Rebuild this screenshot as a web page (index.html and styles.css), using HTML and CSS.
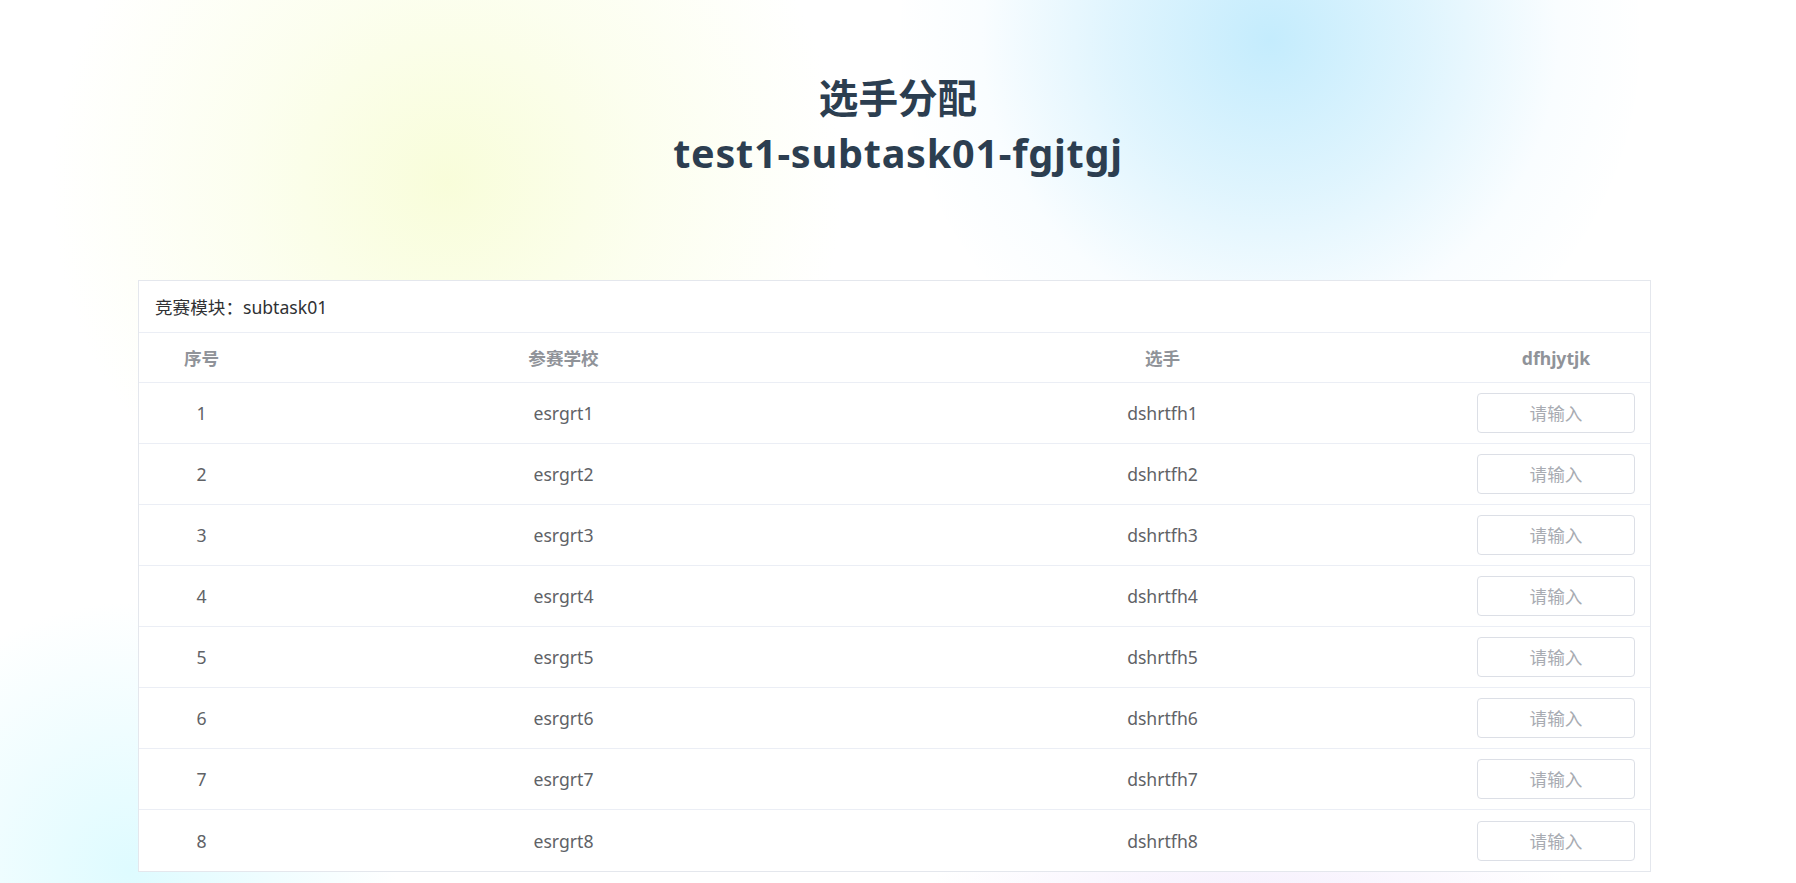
FILE: index.html
```html
<!DOCTYPE html>
<html lang="zh-CN">
<head>
<meta charset="utf-8">
<title>选手分配</title>
<link rel="stylesheet" href="styles.css">
</head>
<body>
<div class="page">
  <div class="blob blob-yellow"></div>
  <div class="blob blob-blue"></div>
  <div class="blob blob-cyan"></div>
  <div class="blob blob-purple"></div>
  <header class="title">
    <h1>选手分配</h1>
    <h1 class="sub">test1-subtask01-fgjtgj</h1>
  </header>
  <section class="card">
    <div class="caption">竞赛模块：subtask01</div>
    <div class="row head">
      <div class="cell">序号</div>
      <div class="cell">参赛学校</div>
      <div class="cell">选手</div>
      <div class="cell">dfhjytjk</div>
    </div>
    <div class="row"><div class="cell">1</div><div class="cell">esrgrt1</div><div class="cell">dshrtfh1</div><div class="cell"><input class="inp" placeholder="请输入"></div></div>
    <div class="row"><div class="cell">2</div><div class="cell">esrgrt2</div><div class="cell">dshrtfh2</div><div class="cell"><input class="inp" placeholder="请输入"></div></div>
    <div class="row"><div class="cell">3</div><div class="cell">esrgrt3</div><div class="cell">dshrtfh3</div><div class="cell"><input class="inp" placeholder="请输入"></div></div>
    <div class="row"><div class="cell">4</div><div class="cell">esrgrt4</div><div class="cell">dshrtfh4</div><div class="cell"><input class="inp" placeholder="请输入"></div></div>
    <div class="row"><div class="cell">5</div><div class="cell">esrgrt5</div><div class="cell">dshrtfh5</div><div class="cell"><input class="inp" placeholder="请输入"></div></div>
    <div class="row"><div class="cell">6</div><div class="cell">esrgrt6</div><div class="cell">dshrtfh6</div><div class="cell"><input class="inp" placeholder="请输入"></div></div>
    <div class="row"><div class="cell">7</div><div class="cell">esrgrt7</div><div class="cell">dshrtfh7</div><div class="cell"><input class="inp" placeholder="请输入"></div></div>
    <div class="row last"><div class="cell">8</div><div class="cell">esrgrt8</div><div class="cell">dshrtfh8</div><div class="cell"><input class="inp" placeholder="请输入"></div></div>
  </section>
</div>
</body>
</html>
```

FILE: styles.css
```css
html, body {
  margin: 0;
  padding: 0;
  background: #ffffff;
}
body {
  font-family: "Noto Sans", "Noto Sans CJK SC", sans-serif;
  color: #2c3e50;
  overflow: hidden;
}
.page {
  position: relative;
  width: 1796px;
  height: 883px;
  overflow: hidden;
  padding-top: 71px;
  box-sizing: border-box;
}
.blob {
  position: absolute;
  border-radius: 50%;
  pointer-events: none;
}
.blob-yellow {
  left: 47px;
  top: -217px;
  width: 800px;
  height: 800px;
  background: radial-gradient(circle at center, rgba(248, 253, 216, 0.95) 0%, rgba(250, 254, 228, 0.6) 35%, rgba(255, 255, 240, 0) 70%);
}
.blob-blue {
  left: 900px;
  top: -330px;
  width: 740px;
  height: 740px;
  background: radial-gradient(circle at center, rgba(196, 236, 253, 1) 0%, rgba(210, 240, 253, 0.7) 30%, rgba(235, 248, 255, 0.3) 55%, rgba(255, 255, 255, 0) 72%);
}
.blob-cyan {
  left: -140px;
  top: 600px;
  width: 540px;
  height: 540px;
  background: radial-gradient(circle at center, rgba(222, 251, 255, 1) 0%, rgba(232, 252, 255, 0.6) 40%, rgba(255, 255, 255, 0) 70%);
}
.blob-purple {
  left: 900px;
  top: 760px;
  width: 700px;
  height: 400px;
  background: radial-gradient(ellipse at center, rgba(242, 234, 252, 1) 0%, rgba(246, 240, 253, 0.6) 40%, rgba(255, 255, 255, 0) 70%);
}
.title {
  position: relative;
  text-align: center;
}
.title h1 {
  margin: 0;
  font-size: 39.6px;
  line-height: 55px;
  font-weight: 700;
  color: #2c3e50;
}
.title .sub {
  letter-spacing: 0.75px;
}
.card {
  position: relative;
  margin: 99px 0 0 138px;
  width: 1513px;
  box-sizing: border-box;
  background: #ffffff;
  border: 1px solid #e4e7ed;
}
.caption {
  height: 51px;
  display: flex;
  align-items: center;
  padding-left: 16px;
  font-size: 17.6px;
  color: #303133;
  border-bottom: 1px solid #ebeef5;
}
.row {
  display: grid;
  grid-template-columns: 125px 1fr 1fr 188px;
  height: 61px;
  box-sizing: border-box;
  border-bottom: 1px solid #ebeef5;
  font-size: 17.6px;
  color: #606266;
}
.row.last {
  border-bottom: none;
  height: 61px;
}
.row.head {
  height: 50px;
  font-weight: 700;
  color: #909399;
}
.cell {
  display: flex;
  align-items: center;
  justify-content: center;
}
.inp {
  width: 158px;
  height: 40px;
  box-sizing: border-box;
  border: 1px solid #dcdfe6;
  border-radius: 4px;
  background: #ffffff;
  text-align: center;
  font-family: "Noto Sans", "Noto Sans CJK SC", sans-serif;
  font-size: 17.6px;
  color: #606266;
  outline: none;
  padding: 0 10px;
}
.inp::placeholder {
  color: #a8abb2;
}
```
